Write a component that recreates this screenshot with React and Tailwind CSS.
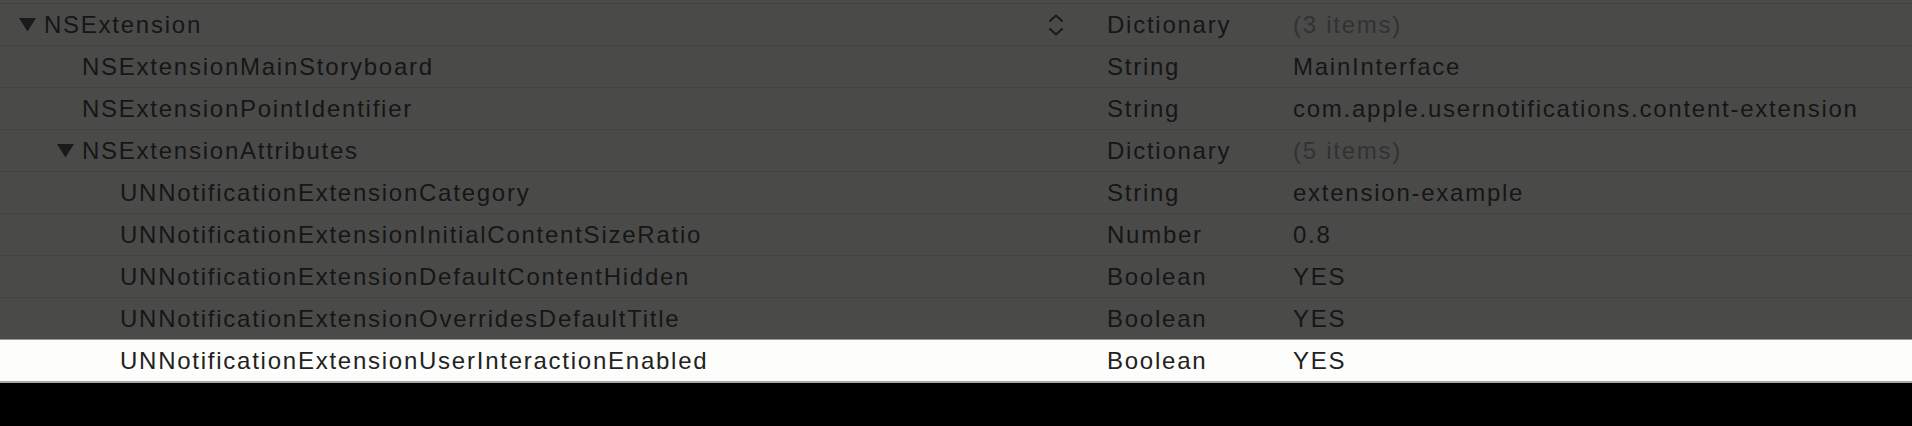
import { useState } from 'react';

const rows = [
    { key: 'NSExtension', level: 0, open: true, type: 'Dictionary', value: '(3 items)', muted: true, stepper: true },
    { key: 'NSExtensionMainStoryboard', level: 1, type: 'String', value: 'MainInterface' },
    { key: 'NSExtensionPointIdentifier', level: 1, type: 'String', value: 'com.apple.usernotifications.content-extension' },
    { key: 'NSExtensionAttributes', level: 1, open: true, type: 'Dictionary', value: '(5 items)', muted: true },
    { key: 'UNNotificationExtensionCategory', level: 2, type: 'String', value: 'extension-example' },
    { key: 'UNNotificationExtensionInitialContentSizeRatio', level: 2, type: 'Number', value: '0.8' },
    { key: 'UNNotificationExtensionDefaultContentHidden', level: 2, type: 'Boolean', value: 'YES' },
    { key: 'UNNotificationExtensionOverridesDefaultTitle', level: 2, type: 'Boolean', value: 'YES' },
    { key: 'UNNotificationExtensionUserInteractionEnabled', level: 2, type: 'Boolean', value: 'YES' },
];

const indent = ['pl-[18px]', 'pl-[56px]', 'pl-[94px]'];

function Disclosure() {
    return (
        <svg width="19" height="15" viewBox="0 0 19 15" className="shrink-0">
            <polygon points="1,1 18,1 9.5,14.5" fill="#1a1a1a" />
        </svg>
    );
}

function Stepper() {
    return (
        <svg width="18" height="26" viewBox="0 0 18 26" className="mr-[42px] shrink-0">
            <path d="M3 9 L9 3.5 L15 9" fill="none" stroke="#1a1a1a" strokeWidth="2" strokeLinecap="round" strokeLinejoin="round" />
            <path d="M3 17 L9 22.5 L15 17" fill="none" stroke="#1a1a1a" strokeWidth="2" strokeLinecap="round" strokeLinejoin="round" />
        </svg>
    );
}

function Row({ row, selected, onSelect }) {
    const text = selected ? 'text-[#222222]' : 'text-[#161616]';
    return (
        <div
            onClick={onSelect}
            className={`grid grid-cols-[1107px_186px_1fr] h-[42px] items-center border-t ${
                selected ? 'bg-[#fdfdfb] border-[#9a9a9a]' : 'border-[#434343]'
            }`}
        >
            <div className={`flex items-center justify-between ${indent[row.level]}`}>
                <div className={`flex items-center ${text}`}>
                    <span className="w-[19px] mr-[7px] flex items-center">{row.open && <Disclosure />}</span>
                    <span>{row.key}</span>
                </div>
                {row.stepper && <Stepper />}
            </div>
            <div className={text}>{row.type}</div>
            <div className={row.muted ? 'text-[#323232]' : text}>{row.value}</div>
        </div>
    );
}

export default function App() {
    const [selected, setSelected] = useState(8);

    return (
        <div className="w-[1912px] h-[426px] bg-black overflow-hidden font-['Liberation_Sans',Arial,sans-serif] text-[24px] tracking-[1.75px] leading-none">
            <div className="bg-[#4a4a49]">
                <div className="h-[3px]" />
                {rows.map((row, i) => (
                    <Row key={row.key} row={row} selected={selected === i} onSelect={() => setSelected(i)} />
                ))}
                <div className="h-[2px] bg-[#a8a8a8]" />
            </div>
        </div>
    );
}
